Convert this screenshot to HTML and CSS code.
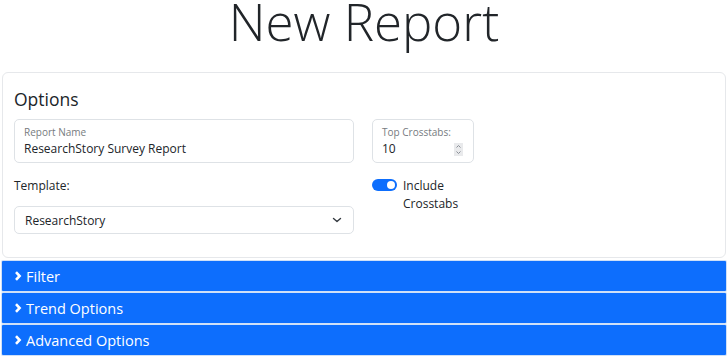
FILE: index.html
```html
<!DOCTYPE html>
<html>
<head>
    <title>New Report</title>
    <link rel="stylesheet" href="styles.css">
</head>
<body>
    <h1 class="page-title">New Report</h1>

    <div class="card">
        <h4 class="card-title">Options</h4>
        <div class="options-grid">
            <div class="col-main">
                <div class="floating-field">
                    <label class="floating-label">Report Name</label>
                    <div class="floating-value">ResearchStory Survey Report</div>
                </div>
                <label class="field-label">Template:</label>
                <div class="select-box">
                    <span>ResearchStory</span>
                    <svg class="select-arrow" width="12" height="8" viewBox="0 0 12 8">
                        <polyline points="2.5,2.5 6,5.5 9.5,2.5" fill="none" stroke="#343a40" stroke-width="1.4" stroke-linecap="round" stroke-linejoin="round"/>
                    </svg>
                </div>
            </div>
            <div class="col-side">
                <div class="floating-field">
                    <label class="floating-label">Top Crosstabs:</label>
                    <div class="number-row">
                        <span class="floating-value">10</span>
                        <span class="spinner">
                            <svg width="9" height="13" viewBox="0 0 9 13">
                                <polyline points="2.5,4.5 4.5,2.5 6.5,4.5" fill="none" stroke="#8a8f96" stroke-width="1"/>
                                <polyline points="2.5,8.5 4.5,10.5 6.5,8.5" fill="none" stroke="#8a8f96" stroke-width="1"/>
                            </svg>
                        </span>
                    </div>
                </div>
                <div class="switch-row">
                    <span class="switch"><span class="switch-knob"></span></span>
                    <span class="switch-label">Include Crosstabs</span>
                </div>
            </div>
        </div>
    </div>

    <div class="accordion">
        <div class="accordion-header">
            <svg class="chevron" width="8" height="10" viewBox="0 0 8 10"><polyline points="2,1.2 5.6,5 2,8.8" fill="none" stroke="#fff" stroke-width="2.6"/></svg>
            Filter
        </div>
        <div class="accordion-header">
            <svg class="chevron" width="8" height="10" viewBox="0 0 8 10"><polyline points="2,1.2 5.6,5 2,8.8" fill="none" stroke="#fff" stroke-width="2.6"/></svg>
            Trend Options
        </div>
        <div class="accordion-header">
            <svg class="chevron" width="8" height="10" viewBox="0 0 8 10"><polyline points="2,1.2 5.6,5 2,8.8" fill="none" stroke="#fff" stroke-width="2.6"/></svg>
            Advanced Options
        </div>
    </div>
</body>
</html>
```

FILE: styles.css
```css
body {
    font-family: "Open Sans", Lato, sans-serif;
    color: #212529;
    margin: 0;
    padding: 0 2px;
    background-color: #fff;
}

.page-title {
    font-weight: 300;
    font-size: 51px;
    line-height: 0.85;
    text-align: center;
    margin: 0 0 29px;
}

.card {
    border: 1px solid #e6e8eb;
    border-radius: 6px;
    padding: 12px 11px 23px;
}

.card-title {
    font-size: 17.5px;
    font-weight: 400;
    line-height: 24px;
    margin: 2px 0 8px;
}

.options-grid {
    display: flex;
    gap: 18px;
}

.col-main {
    width: 340px;
}

.col-side {
    width: 102px;
}

.floating-field {
    box-sizing: border-box;
    border: 1px solid #dee2e6;
    border-radius: 5px;
    height: 44px;
    padding: 5px 9px 0;
}

.floating-label {
    display: block;
    font-size: 10px;
    line-height: 14px;
    color: #767b80;
}

.floating-value {
    font-size: 12px;
    line-height: 20px;
}

.number-row {
    display: flex;
    align-items: center;
    justify-content: space-between;
}

.spinner {
    display: flex;
    background-color: #e9eaec;
    margin-right: 1px;
}

.spinner svg {
    display: block;
}

.field-label {
    display: block;
    font-size: 12px;
    line-height: 20px;
    margin: 13px 0 10px;
}

.select-box {
    box-sizing: border-box;
    display: flex;
    align-items: center;
    justify-content: space-between;
    border: 1px solid #dee2e6;
    border-radius: 5px;
    height: 28px;
    padding: 0 10px;
    font-size: 12px;
}

.switch-row {
    display: flex;
    align-items: flex-start;
    gap: 6px;
    margin-top: 16px;
}

.switch {
    flex: none;
    width: 25px;
    height: 12px;
    border-radius: 6px;
    background-color: #0d6efd;
    display: flex;
    justify-content: flex-end;
    align-items: center;
    padding: 0 2px;
    box-sizing: border-box;
}

.switch-knob {
    width: 8px;
    height: 8px;
    border-radius: 50%;
    background-color: #fff;
}

.switch-label {
    font-size: 12px;
    line-height: 18px;
    margin-top: -2px;
}

.accordion {
    margin-top: 3px;
}

.accordion-header {
    display: flex;
    align-items: center;
    gap: 4px;
    background-color: #0d6efd;
    color: #fff;
    height: 30px;
    padding: 0 12px;
    font-size: 14.5px;
    border-radius: 1px;
    margin-bottom: 2px;
    box-shadow: 0 0 0 1px #cfe0f7;
}

.chevron {
    display: block;
}
```
